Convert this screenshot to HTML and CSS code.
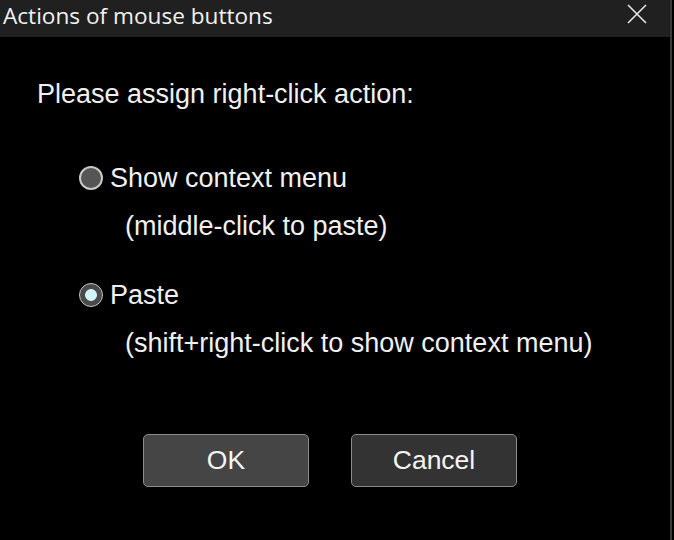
FILE: index.html
```html
<!DOCTYPE html>
<html lang="en">
<head>
    <meta charset="UTF-8">
    <title>Actions of mouse buttons</title>
    <link rel="stylesheet" href="styles.css">
</head>
<body>

<div class="window">
    <!-- title bar -->
    <div class="titlebar">
        <span class="title">Actions of mouse buttons</span>
        <span class="close">
            <svg width="20" height="20" viewBox="0 0 20 20">
                <path d="M1 1 L19 19 M19 1 L1 19" stroke="#e6e6e6" stroke-width="1.6" fill="none"/>
            </svg>
        </span>
    </div>

    <div class="content">
        <p class="prompt">Please assign right-click action:</p>

        <div class="options">
            <div class="option">
                <div class="label-row">
                    <span class="radio"></span>
                    <span>Show context menu</span>
                </div>
                <div class="hint">(middle-click to paste)</div>
            </div>
            <div class="option">
                <div class="label-row">
                    <span class="radio checked"></span>
                    <span>Paste</span>
                </div>
                <div class="hint">(shift+right-click to show context menu)</div>
            </div>
        </div>

        <div class="buttons">
            <button class="btn btn-ok">OK</button>
            <button class="btn">Cancel</button>
        </div>
    </div>
</div>

</body>
</html>
```

FILE: styles.css
```css
body {
    margin: 0;
    background-color: #000;
    font-family: "Liberation Sans", Arial, sans-serif;
}
.window {
    width: 670px;
    height: 540px;
    border-right: 2px solid #3a3a3a;
    background-color: #000;
}
.titlebar {
    height: 37px;
    background-color: #202020;
    display: flex;
    justify-content: space-between;
    align-items: flex-start;
}
.title {
    font-family: "Open Sans", "Noto Sans", sans-serif;
    font-size: 22.6px;
    line-height: 32px;
    color: #f2f2f2;
    padding-left: 3px;
}
.close {
    display: flex;
    margin-top: 4px;
    margin-right: 23px;
}
.content {
    padding-left: 37px;
    font-size: 27px;
    line-height: 32px;
    color: #f0f0f0;
}
.prompt {
    margin: 41px 0 0 0;
}
.options {
    margin-left: 42px;
}
.option {
    margin-top: 52px;
}
.option + .option {
    margin-top: 37px;
}
.label-row {
    display: flex;
    align-items: center;
    gap: 7px;
}
.radio {
    width: 24px;
    height: 24px;
    box-sizing: border-box;
    border-radius: 50%;
    border: 2px solid #c8c8c8;
    background-color: #555;
}
.radio.checked {
    border-width: 1.5px;
    background: radial-gradient(circle, #d2f5fa 0, #d2f5fa 5.5px, #4a4a4a 6.3px);
}
.hint {
    margin-top: 16px;
    margin-left: 46px;
}
.buttons {
    display: flex;
    gap: 42px;
    margin-top: 75px;
    margin-left: 106px;
}
.btn {
    width: 166px;
    height: 53px;
    background-color: #333;
    color: #f5f5f5;
    border: 1.5px solid #8c8c8c;
    border-radius: 5px;
    font-family: "Liberation Sans", Arial, sans-serif;
    font-size: 26.5px;
    padding: 0;
}
.btn-ok {
    background-color: #454545;
}
```
